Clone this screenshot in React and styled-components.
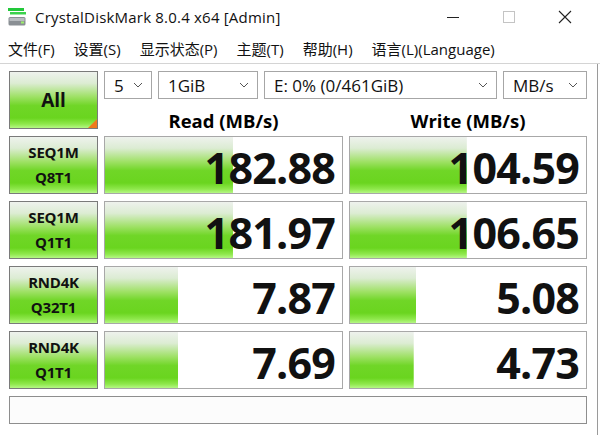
import React from "react";
import styled, { createGlobalStyle } from "styled-components";

const GlobalStyle = createGlobalStyle`
  html, body {
    margin: 0;
    padding: 0;
    background: #ffffff;
  }
  body {
    font-family: "Open Sans", "Noto Sans CJK SC", sans-serif;
    color: #000;
  }
`;

const GREEN = `linear-gradient(180deg, #eef2ed 0%, #dcecd3 20%, #9fe166 44%, #70d627 60%, #6ad51f 82%, #8fe84c 93%, #b5f785 100%)`;

const rows = [
  { top: "SEQ1M", bottom: "Q8T1", read: "182.88", readPct: 54, write: "104.59", writePct: 49.5 },
  { top: "SEQ1M", bottom: "Q1T1", read: "181.97", readPct: 54, write: "106.65", writePct: 49.5 },
  { top: "RND4K", bottom: "Q32T1", read: "7.87", readPct: 31, write: "5.08", writePct: 28 },
  { top: "RND4K", bottom: "Q1T1", read: "7.69", readPct: 31, write: "4.73", writePct: 27 },
];

const menus = ["文件(F)", "设置(S)", "显示状态(P)", "主题(T)", "帮助(H)", "语言(L)(Language)"];

const App = () => {
  return (
    <>
      <GlobalStyle />
      <Window>
        <TitleBar>
          <AppIcon width="18" height="18" viewBox="0 0 18 18">
            <rect x="0" y="0" width="16" height="3" fill="#22c83a" />
            <rect x="2" y="4" width="16" height="2.5" fill="#3bd24c" />
            <rect x="0.5" y="9" width="17" height="8.5" rx="1.5" fill="#8a8f94" />
            <rect x="1.5" y="10" width="15" height="3" fill="#b8bcc0" />
            <rect x="13" y="13.5" width="3" height="2" fill="#9cf06a" />
          </AppIcon>
          <Title>CrystalDiskMark 8.0.4 x64 [Admin]</Title>
          <Controls>
            <ControlButton>
              <svg width="12" height="12" viewBox="0 0 12 12">
                <line x1="0" y1="6.5" x2="12" y2="6.5" stroke="#222" strokeWidth="1" />
              </svg>
            </ControlButton>
            <ControlButton>
              <svg width="12" height="12" viewBox="0 0 12 12">
                <rect x="0.5" y="0.5" width="11" height="11" fill="none" stroke="#c4c4c4" strokeWidth="1" />
              </svg>
            </ControlButton>
            <ControlButton>
              <svg width="14" height="14" viewBox="0 0 14 14">
                <path d="M1 1 L13 13 M13 1 L1 13" stroke="#222" strokeWidth="1.1" />
              </svg>
            </ControlButton>
          </Controls>
        </TitleBar>

        <MenuBar>
          {menus.map((m) => (
            <MenuItem key={m}>{m}</MenuItem>
          ))}
        </MenuBar>

        <Body>
          <Grid>
            <AllButton>
              All
              <Corner />
            </AllButton>
            <HeaderArea>
              <Selects>
                <Select $w={48}>
                  <span>5</span>
                  <Chevron />
                </Select>
                <Select $w={100}>
                  <span>1GiB</span>
                  <Chevron />
                </Select>
                <Select $w={233}>
                  <span>E: 0% (0/461GiB)</span>
                  <Chevron />
                </Select>
                <Select $w={84}>
                  <span>MB/s</span>
                  <Chevron />
                </Select>
              </Selects>
              <Headings>
                <Heading>Read (MB/s)</Heading>
                <Heading>Write (MB/s)</Heading>
              </Headings>
            </HeaderArea>

            {rows.map((r, i) => (
              <React.Fragment key={i}>
                <TestButton>
                  <span>{r.top}</span>
                  <span>{r.bottom}</span>
                </TestButton>
                <Result style={{ backgroundSize: `${r.readPct}% 100%` }}>{r.read}</Result>
                <Result style={{ backgroundSize: `${r.writePct}% 100%` }}>{r.write}</Result>
              </React.Fragment>
            ))}

            <Status />
          </Grid>
        </Body>
      </Window>
    </>
  );
};

const Chevron = () => (
  <ChevronSvg width="10" height="6" viewBox="0 0 10 6">
    <path d="M1 1 L5 5 L9 1" fill="none" stroke="#555" strokeWidth="1" />
  </ChevronSvg>
);

const Window = styled.div`
  width: 600px;
  height: 435px;
  overflow: hidden;
  background: #fff;
  display: flex;
  flex-direction: column;
`;

const TitleBar = styled.div`
  flex: none;
  height: 33px;
  display: flex;
  align-items: center;
  padding-left: 8px;
`;

const AppIcon = styled.svg`
  flex: none;
  margin-top: 1px;
`;

const Title = styled.div`
  margin-left: 9px;
  font-family: "Open Sans", sans-serif;
  font-size: 15px;
  color: #111;
  letter-spacing: 0.2px;
`;

const Controls = styled.div`
  margin-left: auto;
  display: flex;
  height: 100%;
  padding-right: 7px;
`;

const ControlButton = styled.div`
  width: 56px;
  height: 100%;
  display: flex;
  align-items: center;
  justify-content: center;
`;

const MenuBar = styled.div`
  flex: none;
  height: 30px;
  display: flex;
  align-items: center;
  gap: 19px;
  padding-left: 8px;
  border-bottom: 1px solid #d4d4d4;
  font-family: "Open Sans", "Noto Sans CJK SC", sans-serif;
  font-size: 15px;
  color: #111;
`;

const MenuItem = styled.span`
  white-space: nowrap;
`;

const Body = styled.div`
  flex: 1;
  border-right: 1px solid #9a9a9a;
  margin-right: 2px;
  padding: 7px 0 0 9px;
`;

const Grid = styled.div`
  display: grid;
  grid-template-columns: 89px 239px 238px;
  grid-template-rows: repeat(5, 58px) 28px;
  column-gap: 6px;
  row-gap: 7px;
`;

const greenButton = `
  border: 1px solid #7a7a7a;
  background: ${GREEN};
  box-sizing: border-box;
  display: flex;
  align-items: center;
  justify-content: center;
  font-weight: 700;
  color: #111;
`;

const AllButton = styled.div`
  ${greenButton}
  position: relative;
  font-size: 19px;
`;

const Corner = styled.div`
  position: absolute;
  right: 0;
  bottom: 0;
  width: 0;
  height: 0;
  border-style: solid;
  border-width: 0 0 9px 9px;
  border-color: transparent transparent #f07a1c transparent;
`;

const HeaderArea = styled.div`
  grid-column: 2 / 4;
  display: flex;
  flex-direction: column;
`;

const Selects = styled.div`
  display: flex;
  gap: 6px;
  height: 28px;
`;

const Select = styled.div`
  width: ${(p) => p.$w}px;
  box-sizing: border-box;
  border: 1px solid #a6a6a6;
  display: flex;
  align-items: center;
  justify-content: space-between;
  padding: 0 8px 0 9px;
  font-size: 17px;
  color: #111;
  white-space: nowrap;
`;

const ChevronSvg = styled.svg`
  flex: none;
`;

const Headings = styled.div`
  flex: 1;
  display: grid;
  grid-template-columns: 239px 238px;
  column-gap: 6px;
  align-items: end;
`;

const Heading = styled.div`
  text-align: center;
  font-size: 18.5px;
  font-weight: 700;
  line-height: 22px;
  margin-bottom: -3px;
`;

const TestButton = styled.div`
  ${greenButton}
  flex-direction: column;
  font-size: 15px;
  line-height: 25px;
  letter-spacing: -0.2px;
`;

const Result = styled.div`
  box-sizing: border-box;
  border: 1px solid #a8a8a8;
  background-color: #fff;
  background-image: ${GREEN};
  background-repeat: no-repeat;
  background-position: left top;
  display: flex;
  align-items: center;
  justify-content: flex-end;
  padding: 5px 7px 0 0;
  font-size: 43px;
  font-weight: 700;
  letter-spacing: -0.8px;
  color: #111;
  line-height: 1;
`;

const Status = styled.div`
  grid-column: 1 / 4;
  box-sizing: border-box;
  border: 1px solid #8e8e8e;
  background: #fcfcfc;
`;

export default App;
